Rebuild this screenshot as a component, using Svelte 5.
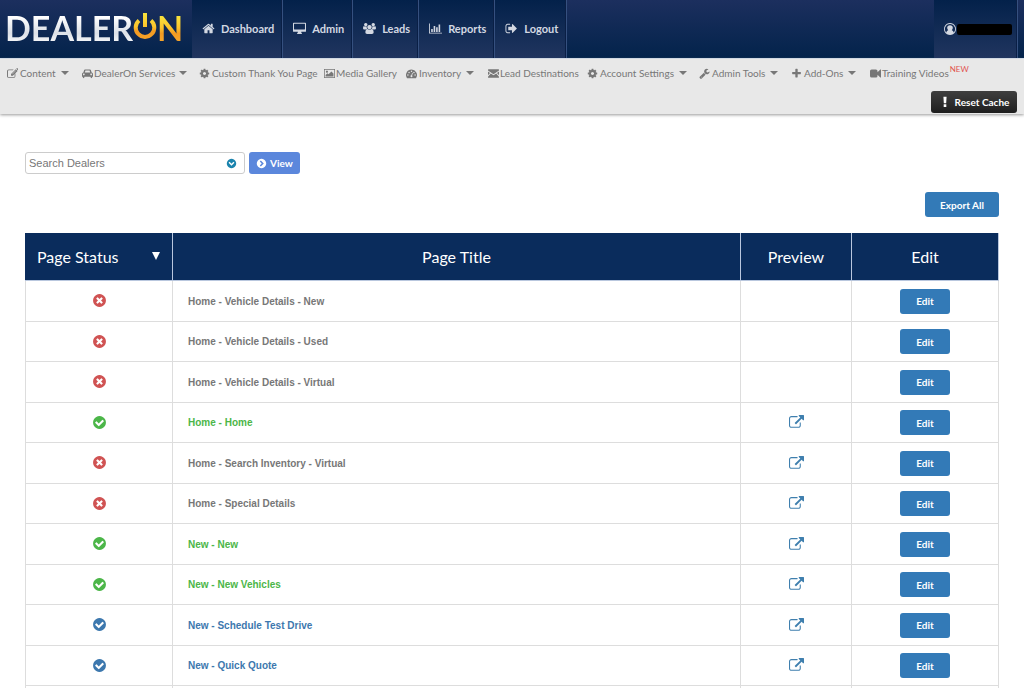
<script>
  const icons = {
    home: 'M1472 992v480q0 26-19 45t-45 19h-384v-384h-256v384h-384q-26 0-45-19t-19-45v-480q0-1 .5-3t.5-3l575-474 575 474q1 2 1 6zm223-69l-62 74q-8 9-21 11h-3q-13 0-21-7l-692-577-692 577q-12 8-24 7-13-2-21-11l-62-74q-8-10-7-23.5t11-21.5l719-599q32-26 76-26t76 26l244 204v-195q0-14 9-23t23-9h192q14 0 23 9t9 23v408l219 182q10 8 11 21.5t-7 23.5z',
    desktop: 'M0 200q0-90 90-90h1612q90 0 90 90v1070q0 90-90 90h-560v100q0 50 60 90 40 30 40 70 0 50-50 50h-580q-60 0-60-50 0-40 40-70 70-40 70-90v-100h-570q-90 0-90-90zM140 290v680q0 50 50 50h1410q50 0 50-50v-680q0-50-50-50h-1410q-50 0-50 50z',
    users: 'M896 400a300 300 0 1 0 .1 0zM380 130a230 230 0 1 0 .1 0zM1412 130a230 230 0 1 0 .1 0zM130 560q60 70 190 75 120 0 190-40-30 200 90 340-150 10-230 110h-190q-180 0-180-170 0-270 130-315zM1662 560q-60 70-190 75-120 0-190-40 30 200-90 340 150 10 230 110h190q180 0 180-170 0-270-130-315zM610 950q110 110 286 110t286-110q260 0 290 480 0 240-240 240h-672q-240 0-240-240 30-480 290-480z',
    chart: 'M0 200h120v1270h1672v120h-1792zM300 950h220v430h-220zM640 550h220v830h-220zM980 740h220v640h-220zM1320 360h220v1020h-220z',
    logout: 'M704 1440q0 4 1 20t.5 26.5-3 23.5-10 19.5-20.5 6.5h-320q-119 0-203.5-84.5t-84.5-203.5v-704q0-119 84.5-203.5t203.5-84.5h320q13 0 22.5 9.5t9.5 22.5q0 4 1 20t.5 26.5-3 23.5-10 19.5-20.5 6.5h-320q-66 0-113 47t-47 113v704q0 66 47 113t113 47h312l11.5 1 11.5 3 8 5.5 7 9 2 13.5zm928-544q0 26-19 45l-544 544q-19 19-45 19t-45-19-19-45v-288h-448q-26 0-45-19t-19-45v-384q0-26 19-45t45-19h448v-288q0-26 19-45t45-19 45 19l544 544q19 19 19 45z',
    edit: 'M280 256h800l-130 128h-650q-140 0-140 140v800q0 140 140 140h800q140 0 140-140v-330l128-128v460q0 266-266 266h-822q-280 0-280-266v-804q0-266 280-266zM1430 200l290 290-770 770h-290v-290zM1510 120l80-80q60-50 120 0l170 170q50 60 0 120l-80 80zM1400 410l-560 560 50 50 560-560z',
    car: 'M480 230h830q100 0 130 90l130 420q220 20 220 230v440h-130v110q0 130-130 130t-130-130v-110h-1010v110q0 130-130 130t-130-130v-110h-130v-440q0-210 220-230l130-420q30-90 130-90zM560 390l-100 350h870l-100-350zM300 900a140 140 0 1 0 .1 0zM1490 900a140 140 0 1 0 .1 0z',
    cog: 'M1152 896q0-106-75-181t-181-75-181 75-75 181 75 181 181 75 181-75 75-181zm512-109v222q0 12-8 23t-20 13l-185 28q-19 54-39 91 35 50 107 138 10 12 10 25t-9 23q-27 37-99 108t-94 71q-12 0-26-9l-138-108q-44 23-91 38-16 136-29 186-7 28-36 28h-222q-14 0-24.5-8.5t-11.5-21.5l-28-184q-49-16-90-37l-141 107q-10 9-25 9-14 0-25-11-126-114-165-168-7-10-7-23 0-12 8-23 15-21 51-66.5t54-70.5q-27-50-41-99l-183-27q-13-2-21-12.5t-8-23.5v-222q0-12 8-23t19-13l186-28q14-46 39-92-40-57-107-138-10-12-10-24 0-10 9-23 26-36 98.5-107.5t94.5-71.5q13 0 26 10l138 107q44-23 91-38 16-136 29-186 7-28 36-28h222q14 0 24.5 8.5t11.5 21.5l28 184q49 16 90 37l142-107q9-9 24-9 13 0 25 10 129 119 165 170 7 8 7 22 0 12-8 23-15 21-51 66.5t-54 70.5q26 50 41 98l183 28q13 2 21 12.5t8 23.5z',
    image: 'M0 160h1792v1472h-1792zM120 280v1232h1552v-1232zM480 420a170 170 0 1 0 .1 0zM260 1370v-230l290-290 180 180 480-480 330 330v490z',
    gauge: 'M896 256a896 896 0 0 1 750 1386q-20 30-50 30h-1400q-30 0-50-30a896 896 0 0 1 750-1386zM310 1020a110 110 0 1 0 .1 0zM500 600a110 110 0 1 0 .1 0zM896 410a110 110 0 1 0 .1 0zM1292 600a110 110 0 1 0 .1 0zM1482 1020a110 110 0 1 0 .1 0zM1010 760l-140 440a150 150 0 1 0 120 40l130-440z',
    mail: 'M0 290q0-70 70-70h1652q70 0 70 70v100l-896 640-896-640zM0 560l330 235-330 400zM1792 560l-330 235 330 400zM450 880l446 320 446-320 450 560v60q0 90-80 90h-1632q-80 0-80-90v-60z',
    wrench: 'M448 1472q0-26-19-45t-45-19-45 19-19 45 19 45 45 19 45-19 19-45zm644-420l-682 682q-37 37-90 37-52 0-91-37l-106-108q-38-36-38-90 0-53 38-91l681-681q39 98 114.5 173.5t173.5 114.5zm634-435q0 39-23 106-47 134-164.5 217.5t-258.5 83.5q-185 0-316.5-131.5t-131.5-316.5 131.5-316.5 316.5-131.5q58 0 121.5 16.5t107.5 46.5q16 11 16 28t-16 28l-293 169v224l193 107q5-3 79-48.5t135.5-81 70.5-35.5q15 0 23.5 10t8.5 25z',
    plus: 'M1600 736v192q0 40-28 68t-68 28h-416v416q0 40-28 68t-68 28h-192q-40 0-68-28t-28-68v-416h-416q-40 0-68-28t-28-68v-192q0-40 28-68t68-28h416v-416q0-40 28-68t68-28h192q40 0 68 28t28 68v416h416q40 0 68 28t28 68z',
    video: 'M260 256h700q260 0 260 250v180l470-430h102v1280h-102l-470-430v180q0 250-260 250h-700q-260 0-260-250v-780q0-250 260-250z',
    user: 'M896 0a896 896 0 1 0 .1 0zM896 140a756 756 0 0 1 560 1264q-70-260-290-330 150-120 150-350 0-380-420-380t-420 380q0 230 150 350-220 70-290 330a756 756 0 0 1 560-1264z',
    bang: 'M660 120h472l-60 950h-352zM700 1230h392v400h-392z',
    cross: 'M1277 1122q0-26-19-45l-181-181 181-181q19-19 19-45 0-27-19-46l-90-90q-19-19-46-19-26 0-45 19l-181 181-181-181q-19-19-45-19-27 0-46 19l-90 90q-19 19-19 46 0 26 19 45l181 181-181 181q-19 19-19 45 0 27 19 46l90 90q19 19 46 19 26 0 45-19l181-181 181 181q19 19 45 19 27 0 46-19l90-90q19-19 19-46zm387-226q0 209-103 385.5t-279.5 279.5-385.5 103-385.5-103-279.5-279.5-103-385.5 103-385.5 279.5-279.5 385.5-103 385.5 103 279.5 279.5 103 385.5z',
    check: 'M1412 734q0-28-18-46l-91-90q-19-19-45-19t-45 19l-408 407-226-226q-19-19-45-19t-45 19l-91 90q-18 18-18 46 0 27 18 45l362 362q19 19 45 19 27 0 46-19l543-543q18-18 18-45zm252 162q0 209-103 385.5t-279.5 279.5-385.5 103-385.5-103-279.5-279.5-103-385.5 103-385.5 279.5-279.5 385.5-103 385.5 103 279.5 279.5 103 385.5z',
    external: 'M1408 928v320q0 119-84.5 203.5t-203.5 84.5h-832q-119 0-203.5-84.5t-84.5-203.5v-832q0-119 84.5-203.5t203.5-84.5h704q14 0 23 9t9 23v64q0 14-9 23t-23 9h-704q-66 0-113 47t-47 113v832q0 66 47 113t113 47h832q66 0 113-47t47-113v-320q0-14 9-23t23-9h64q14 0 23 9t9 23zm384-864v512q0 26-19 45t-45 19-45-19l-176-176-652 652q-10 10-23 10t-23-10l-114-114q-10-10-10-23t10-23l652-652-176-176q-19-19-19-45t19-45 45-19h512q26 0 45 19t19 45z',
    down: 'M896 128a768 768 0 1 0 .1 0zM896 1260l-480-480 170-170 310 310 310-310 170 170z',
    right: 'M896 128a768 768 0 1 0 .1 0zM1270 896l-480 480-170-170 310-310-310-310 170-170z'
  };

  const sections = [
    ['home', 'Dashboard'],
    ['desktop', 'Admin'],
    ['users', 'Leads'],
    ['chart', 'Reports'],
    ['logout', 'Logout']
  ];

  const menu = [
    { icon: 'edit', label: 'Content', drop: true },
    { icon: 'car', label: 'DealerOn Services', drop: true, tight: true },
    { icon: 'cog', label: 'Custom Thank You Page' },
    { icon: 'image', label: 'Media Gallery', tight: true },
    { icon: 'gauge', label: 'Inventory', drop: true },
    { icon: 'mail', label: 'Lead Destinations', tight: true },
    { icon: 'cog', label: 'Account Settings', drop: true },
    { icon: 'wrench', label: 'Admin Tools', drop: true },
    { icon: 'plus', label: 'Add-Ons', drop: true },
    { icon: 'video', label: 'Training Videos', tight: true, fresh: true }
  ];

  const pages = [
    { title: 'Home - Vehicle Details - New', status: 'off' },
    { title: 'Home - Vehicle Details - Used', status: 'off' },
    { title: 'Home - Vehicle Details - Virtual', status: 'off' },
    { title: 'Home - Home', status: 'live', preview: true },
    { title: 'Home - Search Inventory - Virtual', status: 'off', preview: true },
    { title: 'Home - Special Details', status: 'off', preview: true },
    { title: 'New - New', status: 'live', preview: true },
    { title: 'New - New Vehicles', status: 'live', preview: true },
    { title: 'New - Schedule Test Drive', status: 'default', preview: true },
    { title: 'New - Quick Quote', status: 'default', preview: true }
  ];

  const statusNames = { off: 'Disabled', live: 'Enabled', default: 'Default' };
</script>

{#snippet icon(name)}
  <svg class="icon" viewBox="0 0 1792 1792" aria-hidden="true">
    <path d={icons[name]} fill="currentColor" fill-rule="evenodd" />
  </svg>
{/snippet}

<header>
  <div class="topbar">
    <a class="logo" href="#home" aria-label="DealerOn">
      <span class="silver">DEALER</span>
      <svg class="power" viewBox="0 0 24 28" aria-hidden="true">
        <defs>
          <linearGradient id="gold" x1="0" y1="0" x2="0" y2="28" gradientUnits="userSpaceOnUse">
            <stop offset="0" stop-color="#f8e33c" />
            <stop offset="0.5" stop-color="#fbc32c" />
            <stop offset="0.65" stop-color="#f39a22" />
            <stop offset="1" stop-color="#f6a52a" />
          </linearGradient>
        </defs>
        <path d="M6 7.5A9.3 9.3 0 1 0 18 7.5" fill="none" stroke="url(#gold)" stroke-width="4" />
        <path d="M10 0h4v14h-4z" fill="url(#gold)" />
      </svg>
      <span class="gold">N</span>
    </a>
    <nav class="sections">
      {#each sections as [name, label]}
        <a href="#{label}">{@render icon(name)}{label}</a>
      {/each}
    </nav>
    <a class="account" href="#account" aria-label="Account">
      {@render icon('user')}<span class="redacted"></span>
    </a>
  </div>

  <div class="subbar">
    <nav class="menu">
      {#each menu as item}
        <a href="#{item.label}" class:tight={item.tight}>
          {@render icon(item.icon)}<span>{item.label}</span>
          {#if item.drop}<i class="caret"></i>{/if}
          {#if item.fresh}<sup>NEW</sup>{/if}
        </a>
      {/each}
    </nav>
    <button class="reset">{@render icon('bang')}Reset Cache</button>
  </div>
</header>

<main>
  <form class="search" onsubmit={(e) => e.preventDefault()}>
    <div class="combo">
      <input type="text" placeholder="Search Dealers" aria-label="Search Dealers" />
      <button type="button" aria-label="Show dealers">{@render icon('down')}</button>
    </div>
    <button class="view">{@render icon('right')}View</button>
  </form>

  <button class="blue export">Export All</button>

  <table>
    <colgroup>
      <col class="c-status" /><col /><col class="c-preview" /><col class="c-edit" />
    </colgroup>
    <thead>
      <tr>
        <th><div class="sort">Page Status<i></i></div></th>
        <th>Page Title</th>
        <th>Preview</th>
        <th>Edit</th>
      </tr>
    </thead>
    <tbody>
      {#each pages as page}
        <tr class={page.status}>
          <td class="status" aria-label={statusNames[page.status]}>
            {@render icon(page.status === 'off' ? 'cross' : 'check')}
          </td>
          <td class="title">{page.title}</td>
          <td class="preview">
            {#if page.preview}
              <a href="#preview" aria-label="Preview {page.title}">{@render icon('external')}</a>
            {/if}
          </td>
          <td><button class="blue">Edit</button></td>
        </tr>
      {/each}
      <tr class="tail"><td></td><td></td><td></td><td></td></tr>
    </tbody>
  </table>
</main>

<style>
  :global(body) {
    background: #fff;
    font-family: Lato, "Liberation Sans", sans-serif;
  }
  a {
    color: inherit;
    text-decoration: none;
  }
  button {
    font-family: inherit;
    font-size: 10px;
    font-weight: 700;
    color: #fff;
    border: 0;
    cursor: pointer;
  }
  .icon {
    display: block;
    flex: none;
    width: 12px;
    height: 12px;
  }

  .topbar {
    display: flex;
    height: 58px;
    padding-right: 6px;
    background: linear-gradient(#1c2f5e, #03234b);
    border-bottom: 1px solid #dbe5f2;
  }
  .logo {
    display: flex;
    align-items: center;
    flex: none;
    box-sizing: border-box;
    width: 192px;
    padding: 0 0 3px 5px;
    font-size: 34px;
    line-height: 54px;
    font-weight: 700;
  }
  .silver,
  .gold {
    color: transparent;
    background: linear-gradient(#fff 30%, #e6e9ee 50%, #dce0e7 60%, #f1f3f6 74%);
    -webkit-background-clip: text;
    background-clip: text;
  }
  .gold {
    background-image: linear-gradient(#f8e33c 28%, #fbc32c 50%, #f39a22 60%, #f6a52a 74%);
  }
  .power {
    width: 24px;
    height: 28px;
    margin-bottom: 2px;
  }
  .sections {
    display: flex;
    flex: 1;
  }
  .sections a,
  .account {
    display: flex;
    align-items: center;
    gap: 6px;
    padding: 0 8px 2px 10px;
    background: linear-gradient(#03214a, #20355f);
    border-right: 1px solid #35507f;
    box-shadow: inset -1px 0 #0a1f45;
    color: #d3d8e2;
    font-size: 11px;
    font-weight: 700;
  }
  .sections .icon {
    width: 13px;
    height: 13px;
  }
  .account {
    gap: 1px;
    padding: 0 5px 0 10px;
  }
  .redacted {
    width: 55px;
    height: 11px;
    border-radius: 2px;
    background: #000;
  }

  .subbar {
    display: flex;
    flex-direction: column;
    height: 55px;
    background: #e8e8e8;
    box-shadow: 0 1px 3px #999;
  }
  .menu {
    display: grid;
    grid-template-columns: 75fr 117fr 125fr 82fr 82fr 99fr 112fr 92fr 79fr 154fr;
    padding: 6px 0 0 7px;
    color: #777;
    font-size: 10px;
    line-height: 16px;
    white-space: nowrap;
  }
  .menu a {
    display: flex;
    align-items: center;
    gap: 2px;
    min-width: 0;
  }
  .menu .tight {
    gap: 1px;
  }
  .menu .icon {
    width: 11px;
    height: 11px;
  }
  .caret {
    margin-left: 3px;
    border: 4px solid transparent;
    border-top-color: #777;
    border-bottom: 0;
  }
  sup {
    align-self: flex-start;
    color: #e2534e;
    font-size: 8px;
    line-height: 8px;
  }
  .reset {
    display: flex;
    align-items: center;
    justify-content: center;
    align-self: flex-end;
    gap: 4px;
    width: 86px;
    height: 22px;
    margin: 10px 7px 0 0;
    padding: 0;
    border-radius: 3px;
    background: linear-gradient(#3f3f3f, #1f1f1f);
    white-space: nowrap;
  }

  main {
    display: flex;
    flex-direction: column;
    padding: 38px 25px 0;
  }
  .search {
    display: flex;
    gap: 4px;
  }
  .combo {
    display: flex;
    align-items: center;
    box-sizing: border-box;
    width: 220px;
    height: 22px;
    border: 1px solid #ccc;
    border-radius: 3px;
  }
  .combo input {
    flex: 1;
    min-width: 0;
    padding: 0 0 0 3px;
    border: 0;
    outline: 0;
    background: none;
    font: 11px "Liberation Sans", Arial, sans-serif;
  }
  .combo input::placeholder {
    color: #777;
  }
  .combo button {
    padding: 0 7px;
    background: none;
    color: #1b84ae;
  }
  .view {
    display: flex;
    align-items: center;
    justify-content: center;
    gap: 3px;
    width: 51px;
    height: 22px;
    padding: 0;
    border-radius: 3px;
    background: #5b87dc;
  }
  .view .icon,
  .combo .icon {
    width: 11px;
    height: 11px;
  }
  .blue {
    width: 50px;
    height: 25px;
    padding: 0;
    border-radius: 3px;
    background: #337ab7;
  }
  .export {
    align-self: flex-end;
    width: 74px;
    margin: 18px 0 16px;
  }

  table {
    width: 100%;
    table-layout: fixed;
    border-collapse: collapse;
  }
  .c-status,
  .c-edit {
    width: 147px;
  }
  .c-preview {
    width: 111px;
  }
  th {
    height: 44px;
    padding: 0 0 2px;
    background: #0a2c5c;
    border: 1px solid #b9c7de;
    border-top-color: #0a2c5c;
    color: #fff;
    font-size: 16px;
    font-weight: 400;
  }
  th:first-child {
    border-left-color: #0a2c5c;
  }
  .sort {
    display: flex;
    align-items: center;
    justify-content: space-between;
    padding: 0 12px 0 11px;
  }
  .sort i {
    border: 4px solid transparent;
    border-top: 8px solid #fff;
    border-bottom: 0;
  }
  td {
    height: 40px;
    padding: 0;
    border: 1px solid #ddd;
    text-align: center;
  }
  tr:nth-child(even) td {
    height: 39px;
  }
  .title {
    padding-left: 15px;
    text-align: left;
    font-family: "Liberation Sans", Arial, sans-serif;
    font-size: 10px;
    font-weight: 700;
  }
  .off { color: #777; }
  .live { color: #4cb649; }
  .default { color: #3d78ae; }
  .status .icon {
    width: 15px;
    height: 15px;
    margin: 0 auto 1px;
  }
  .off .status { color: #d05353; }
  .preview .icon {
    width: 15px;
    height: 15px;
    margin: 0 auto;
    color: #3f7fae;
  }
  tbody .tail td {
    height: 2px;
    border-bottom: 0;
  }
</style>
